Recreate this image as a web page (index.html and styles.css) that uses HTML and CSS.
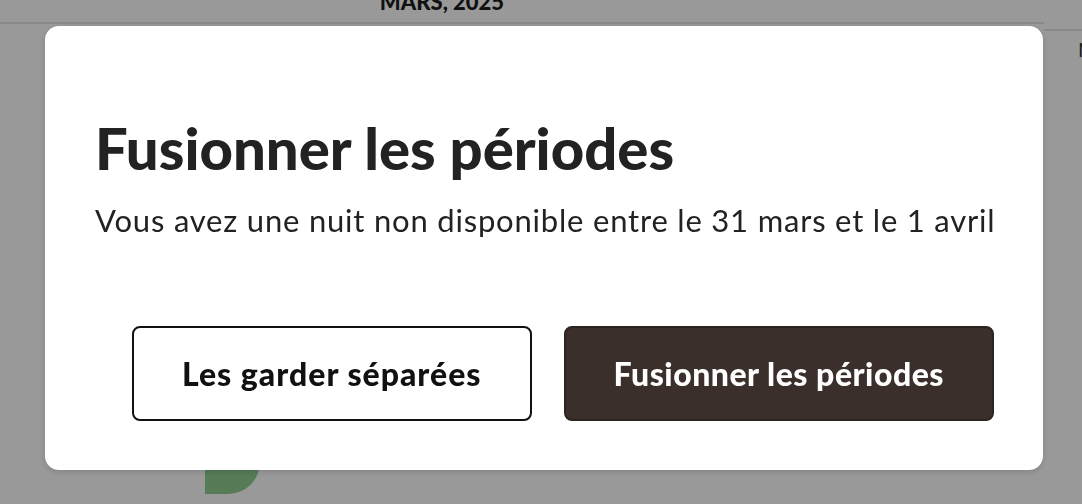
FILE: index.html
```html
<!DOCTYPE html>
<html lang="fr">

<head>
  <meta charset="UTF-8">
  <meta name="viewport" content="width=device-width, initial-scale=1.0">
  <title>Fusionner les périodes</title>
  <link rel="stylesheet" href="styles.css">
</head>

<body>
  <div class="page">
    <div class="calendar">
      <div class="month">
        <h2 class="month-title">MARS, 2025</h2>
        <div class="week">
          <span class="day day-end">31</span>
        </div>
      </div>
      <aside class="side">
        <div class="side-head">N</div>
      </aside>
    </div>
  </div>

  <div class="overlay">
    <div class="modal" role="dialog" aria-labelledby="merge-title">
      <h1 id="merge-title" class="modal-title">Fusionner les périodes</h1>
      <p class="modal-text">Vous avez une nuit non disponible entre le 31 mars et le 1 avril</p>
      <div class="modal-actions">
        <button class="btn btn-outline">Les garder séparées</button>
        <button class="btn btn-primary">Fusionner les périodes</button>
      </div>
    </div>
  </div>
</body>

</html>
```

FILE: styles.css
```css
body {
  margin: 0;
  height: 100vh;
  overflow: hidden;
  font-family: Lato, "Open Sans", sans-serif;
  background: #fff;
  color: #222;
}

.page {
  margin-top: -12px;
}

.calendar {
  display: flex;
}

.month {
  width: 884px;
}

.month-title {
  margin: 0;
  height: 36px;
  line-height: 28px;
  font-size: 22px;
  font-weight: 900;
  text-align: center;
  color: #1c1c1c;
  border-bottom: 2px solid #e4e4e4;
  width: 1044px;
  box-sizing: border-box;
  padding-right: 160px;
}

.week {
  display: flex;
  padding: 428px 0 0 205px;
}

.day {
  width: 55px;
  height: 42px;
  box-sizing: border-box;
  padding-top: 1px;
  display: flex;
  justify-content: center;
  font-size: 16px;
  font-weight: 700;
}

.day-end {
  background: #8fce8f;
  border-bottom-right-radius: 32px;
}

.side {
  flex: 1;
  margin-left: 160px;
  padding-top: 41px;
}

.side-head {
  border-top: 2px solid #e4e4e4;
  padding: 6px 0 0 34px;
  font-size: 20px;
  color: #333;
}

.overlay {
  position: fixed;
  inset: 0;
  background: rgba(0, 0, 0, 0.4);
  display: flex;
  align-items: flex-start;
  padding: 26px 0 0 45px;
}

.modal {
  width: 998px;
  height: 444px;
  box-sizing: border-box;
  background: #fff;
  border-radius: 14px;
  box-shadow: 0 2px 6px rgba(0, 0, 0, 0.15);
  padding: 90px 49px 49px 50px;
  display: flex;
  flex-direction: column;
}

.modal-title {
  margin: 0;
  font-size: 58px;
  line-height: 64px;
  font-weight: 900;
  color: #222;
}

.modal-text {
  margin: 22px 0 0;
  font-size: 31px;
  line-height: 36px;
  letter-spacing: 0.8px;
  white-space: nowrap;
  color: #222;
}

.modal-actions {
  margin-top: auto;
  display: flex;
  justify-content: flex-end;
  gap: 32px;
}

.btn {
  height: 95px;
  padding: 0 48px;
  border-radius: 8px;
  font-family: inherit;
  font-size: 32px;
  font-weight: 900;
  cursor: pointer;
}

.btn-outline {
  background: #fff;
  border: 2px solid #111;
  color: #111;
  letter-spacing: 1px;
}

.btn-primary {
  background: #3a2f2a;
  border: 2px solid #2c2420;
  color: #fff;
  letter-spacing: 0.5px;
}
```
